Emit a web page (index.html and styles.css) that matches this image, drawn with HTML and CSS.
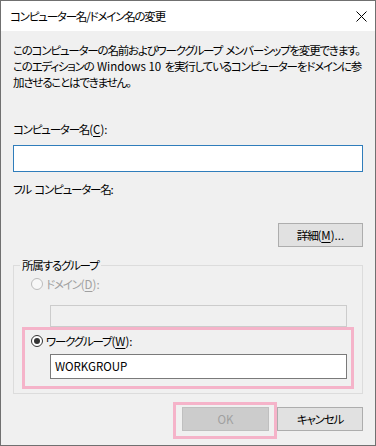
FILE: index.html
```html
<!DOCTYPE html>
<html lang="ja">
<head>
  <meta charset="UTF-8" />
  <title>コンピューター名/ドメイン名の変更</title>
  <link rel="stylesheet" href="styles.css">
</head>
<body>

  <div class="dialog">
    <div class="titlebar">
      <span class="title">コンピューター名/ドメイン名の変更</span>
      <svg class="close" width="11" height="11" viewBox="0 0 11 11">
        <path d="M0.5 0.5 L10.5 10.5 M10.5 0.5 L0.5 10.5" stroke="#000" stroke-width="1" fill="none" />
      </svg>
    </div>

    <div class="content">
      <p class="desc">
        このコンピューターの名前およびワークグループ メンバーシップを変更できます。<br>
        このエディションの <span class="latin">Windows 10</span> を実行しているコンピューターをドメインに参<br>
        加させることはできません。
      </p>

      <p class="label name-label">コンピューター名<span class="latin">(<u>C</u>):</span></p>
      <div class="textbox focused"></div>

      <p class="label full-label">フル コンピューター名<span class="latin">:</span></p>

      <div class="more-row">
        <button class="btn">詳細<span class="latin">(<u>M</u>)...</span></button>
      </div>

      <fieldset class="group">
        <legend>所属するグループ</legend>

        <div class="radio disabled domain-radio">
          <span class="circle"></span>ドメイン<span class="latin">(<u>D</u>):</span>
        </div>
        <div class="textbox disabled"></div>

        <div class="highlight wg-box">
          <div class="radio wg-radio">
            <span class="circle checked"></span>ワークグループ<span class="latin">(<u>W</u>):</span>
          </div>
          <div class="textbox wg-input">WORKGROUP</div>
        </div>
      </fieldset>

      <div class="actions">
        <div class="highlight ok-box">
          <button class="btn disabled">OK</button>
        </div>
        <button class="btn cancel">キャンセル</button>
      </div>
    </div>
  </div>

</body>
</html>
```

FILE: styles.css
```css
* {
  margin: 0;
  padding: 0;
  box-sizing: border-box;
}

body {
  font-family: "Noto Sans CJK JP", "Noto Sans", sans-serif;
  font-size: 11.5px;
  line-height: 16px;
  letter-spacing: -1.2px;
  word-spacing: 2px;
  color: #000;
  background: #fff;
  font-feature-settings: "palt";
}

u {
  text-decoration: underline;
  text-underline-offset: 2px;
}

.latin {
  letter-spacing: 0;
  word-spacing: 0;
}

.dialog {
  width: 376px;
  height: 446px;
  border: 1px solid #707070;
  background: #f0f0f0;
  display: flex;
  flex-direction: column;
}

.titlebar {
  height: 30px;
  background: #fff;
  display: flex;
  align-items: center;
  justify-content: space-between;
  padding: 0 8px 0 9px;
  white-space: nowrap;
}

.close {
  display: block;
  margin-top: 1px;
}

.content {
  padding: 11px 12px 0 12px;
}

.desc {
  white-space: nowrap;
}

.name-label {
  margin-top: 31px;
}

.textbox {
  width: 100%;
  height: 27px;
  background: #fff;
  border: 1px solid #7a7a7a;
}

.textbox.focused {
  margin-top: 8px;
  border-color: #2f7dbb;
}

.full-label {
  margin-top: 9px;
}

.more-row {
  margin-top: 26px;
  display: flex;
  justify-content: flex-end;
}

.btn {
  font-family: inherit;
  font-size: 11.5px;
  line-height: 16px;
  letter-spacing: -1.2px;
  color: #000;
  width: 85px;
  height: 24px;
  background: #e1e1e1;
  border: 1px solid #adadad;
  font-feature-settings: "palt";
}

.btn.disabled {
  width: 87px;
  background: #cccccc;
  border-color: #bfbfbf;
  color: #a0a0a0;
  letter-spacing: 0;
}

.group {
  margin-top: 10px;
  border: 1px solid #dcdcdc;
  padding: 0 0 4px 0;
}

.group legend {
  margin-left: 6px;
  padding: 0 2px;
}

.radio {
  display: flex;
  align-items: center;
  height: 16px;
}

.circle {
  width: 12px;
  height: 12px;
  border-radius: 50%;
  border: 1px solid #333;
  background: #fff;
  margin-right: 3px;
  display: flex;
  align-items: center;
  justify-content: center;
}

.circle.checked::after {
  content: "";
  width: 6px;
  height: 6px;
  border-radius: 50%;
  background: #333;
}

.radio.disabled {
  color: #a0a0a0;
}

.radio.disabled .circle {
  border-color: #bcbcbc;
  background: #f7f7f7;
}

.domain-radio {
  margin-top: 3px;
  padding-left: 17px;
}

.textbox.disabled {
  margin: 13px 0 0 36px;
  width: 297px;
  height: 22px;
  background: #f0f0f0;
  border-color: #cccccc;
}

.highlight {
  border: 3px solid #f5b3c9;
}

.wg-box {
  margin: 0 8px;
  padding: 3px 0 7px 0;
}

.wg-radio {
  padding-left: 6px;
}

.wg-input {
  margin: 5px 0 0 25px;
  width: 297px;
  height: 25px;
  padding-left: 4px;
  line-height: 23px;
  letter-spacing: 0;
}

.actions {
  margin-top: 8px;
  display: flex;
  justify-content: flex-end;
  align-items: flex-start;
}

.ok-box {
  padding: 2px 5px 5px 6px;
}

.cancel {
  margin-top: 5px;
  width: 86px;
}
```
